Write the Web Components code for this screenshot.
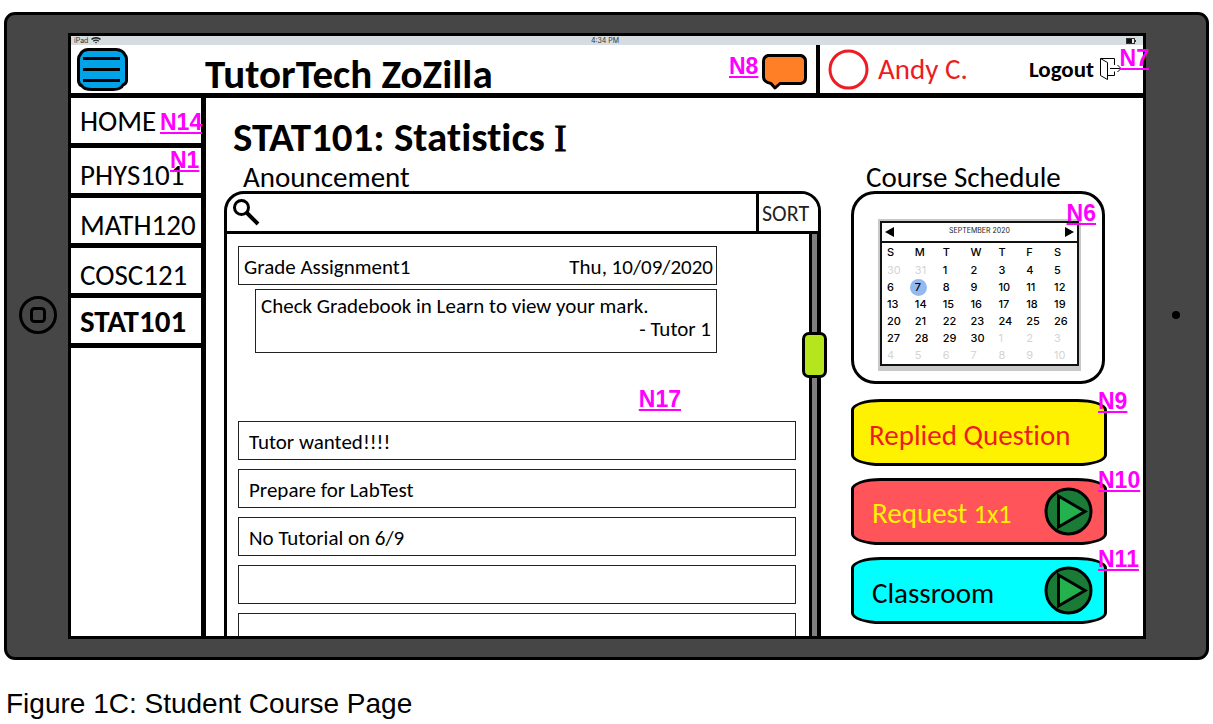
<!DOCTYPE html>
<html lang="en">
<head>
<meta charset="utf-8">
<title>Student Course Page</title>
<style>
  html, body { margin: 0; background: #fff; }
  body { font-family: Carlito, Calibri, Lato, sans-serif; font-variant-ligatures: none; color: #000; }
</style>
</head>
<body>
<course-figure>
  <tablet-frame>
    <status-bar></status-bar>
    <app-header user="Andy C.">TutorTech ZoZilla</app-header>
    <course-layout>
      <course-nav slot="nav">
        <nav-item raised note="N14" style="--note-x: 89px; --note-y: 12px">HOME</nav-item>
        <nav-item note="N1" style="--note-x: 99px; --note-y: 0px">PHYS101</nav-item>
        <nav-item>MATH120</nav-item>
        <nav-item>COSC121</nav-item>
        <nav-item raised current>STAT101</nav-item>
      </course-nav>
      <span slot="title">STAT101: Statistics</span>
      <announcement-board slot="board">
        <announcement-item open date="Thu, 10/09/2020" author="- Tutor 1" body="Check Gradebook in Learn to view your mark.">Grade Assignment1</announcement-item>
        <announcement-item>Tutor wanted!!!!</announcement-item>
        <announcement-item>Prepare for LabTest</announcement-item>
        <announcement-item>No Tutorial on 6/9</announcement-item>
        <announcement-item></announcement-item>
        <announcement-item></announcement-item>
      </announcement-board>
      <schedule-calendar slot="side"></schedule-calendar>
      <action-button slot="side" note="N9" style="--fill: #fff200; --ink: #ed1c24">Replied Question</action-button>
      <action-button slot="side" play note="N10" style="--fill: #ff555a; --ink: #fff200">Request <small>1x1</small></action-button>
      <action-button slot="side" play note="N11" style="--fill: #00ffff; --ink: #000">Classroom</action-button>
    </course-layout>
  </tablet-frame>
  <span slot="caption">Figure 1C: Student Course Page</span>
</course-figure>

<script>
function define(name, render) {
  customElements.define(name, class extends HTMLElement {
    connectedCallback() {
      if (this.shadowRoot) return;
      const t = document.createElement('template');
      t.innerHTML = '<style>*{box-sizing:border-box}button,input{font:inherit;color:inherit;margin:0}</style>' + render(this);
      this.attachShadow({ mode: 'open' }).append(t.content.cloneNode(true));
    }
  });
}

define('course-figure', () => `
<style>
  :host { display: block; }
  figure { margin: 0; display: flex; flex-direction: column; height: 100vh; min-height: 640px; padding: 12px 4px 0; }
  ::slotted(tablet-frame) { flex: 1; min-height: 0; }
  figcaption { font: 28px/32px "Liberation Sans", Arial, sans-serif; padding: 28px 2px 4px; }
</style>
<figure><slot></slot><figcaption><slot name="caption"></slot></figcaption></figure>`);

define('tablet-frame', () => `
<style>
  :host { display: grid; grid-template-columns: 61px minmax(0, 1fr) 60px; padding: 18px 0; background: #464646; border: 3px solid #000; border-radius: 11px; box-sizing: border-box; }
  .edge { display: flex; align-items: center; justify-content: center; }
  .screen { background: #fff; border: 3px solid #000; display: flex; flex-direction: column; min-height: 0; }
  ::slotted(course-layout) { flex: 1; min-height: 0; }
  .home, .camera { display: block; margin-top: -42px; }
</style>
<div class="edge"><svg class="home" width="40" height="40" viewBox="0 0 40 40" fill="none" stroke="#000" stroke-width="3"><circle cx="20" cy="20" r="17.5"/><rect x="13.500" y="13.500" width="13" height="13" rx="3"/></svg></div>
<div class="screen"><slot></slot></div>
<div class="edge"><svg class="camera" width="10" height="10"><circle cx="5" cy="5" r="4"/></svg></div>`);

define('status-bar', () => `
<style>
  :host { display: grid; grid-template-columns: 1fr auto 1fr; align-items: center; background: #d6dde0; color: #333; font: 7px/9px Inter, sans-serif; padding: 0 7px 0 3px; }
  .left { display: flex; gap: 3px; align-items: center; }
  .right { display: flex; justify-content: flex-end; }
  svg { display: block; }
</style>
<span class="left">iPad <svg width="10" height="7" viewBox="0 0 10 7" fill="none" stroke="#222" stroke-width="1.400"><path d="M.5 2.400Q5-1 9.500 2.400M2.300 4.200Q5 2 7.700 4.200"/><circle cx="5" cy="5.600" r=".8" fill="#222" stroke="none"/></svg></span>
<span>4:34 PM</span>
<span class="right"><svg width="10" height="6"><rect x=".5" y=".5" width="8" height="5" fill="#eee" stroke="#333"/><rect x="1" y="1" width="5" height="4" fill="#111"/><rect x="9" y="2" width="1" height="2" fill="#333"/></svg></span>`);

define('note-link', () => `
<style>
  :host { position: absolute; z-index: 5; display: block; }
  a { font: bold 23px/24px "Liberation Sans", Arial, sans-serif; color: #f0f; display: block; text-decoration: underline; text-decoration-thickness: 2px; text-underline-offset: 2px; }
</style>
<a href="#note"><slot></slot></a>`);

define('app-header', el => `
<style>
  :host { display: grid; grid-template-columns: minmax(0, 1fr) 327px; height: 53px; border-bottom: 5px solid #000; box-sizing: border-box; }
  .brand { display: flex; align-items: center; padding: 0 9px 0 6px; }
  .menu { border: 0; padding: 0; background: none; width: 51px; margin-right: 77px; }
  svg { display: block; }
  h1 { margin: 0; flex: 1; align-self: flex-end; font-size: 41px; line-height: 38px; font-weight: bold; white-space: nowrap; }
  .chat { position: relative; margin-top: 5px; }
  .chat button { border: 0; padding: 0; background: none; display: block; }
  .chat note-link { left: -33px; top: 0; }
  .user { position: relative; display: flex; align-items: center; border-left: 4px solid #000; padding: 0 20px 0 8px; }
  .name { color: #ed1c24; font-size: 29px; line-height: 32px; margin-left: 9px; flex: 1; }
  .logout { border: 0; padding: 0; background: none; font-size: 23px; line-height: 26px; font-weight: bold; display: flex; gap: 5px; align-items: center; }
  .user note-link { right: -6px; top: 1px; }
</style>
<div class="brand">
  <button class="menu" aria-label="Menu"><svg width="51" height="43" viewBox="0 0 51 43"><path d="M11 1.500H39Q46 2 48 7Q49.500 8 49.500 12V33Q49 36 46 37Q44 41.500 36 41.500H15Q7 41.500 5 38Q2 37 1.500 33V12Q1.500 8 3 7Q5 2 11 1.500Z" fill="#00a2e8" stroke="#000" stroke-width="3"/><path d="M6 10.500H43M6 21.500H43M6 32.500H43" stroke="#000" stroke-width="3"/></svg></button>
  <h1><slot></slot></h1>
  <div class="chat"><button aria-label="Messages"><svg width="45" height="36" viewBox="0 0 45 36"><path d="M6 1.500H39Q43.500 3 43.500 7V24Q43.500 28.500 39 29.500H18L13 34L9 29.500Q1.500 28 1.500 23V7Q1.500 3 6 1.500Z" fill="#ff7f27" stroke="#000" stroke-width="3" stroke-linejoin="round"/></svg></button><note-link>N8</note-link></div>
</div>
<div class="user">
  <svg width="41" height="41"><circle cx="20.500" cy="20.500" r="18.500" fill="none" stroke="#ed1c24" stroke-width="3"/></svg>
  <span class="name">${el.getAttribute('user')}</span>
  <button class="logout">Logout <svg width="24" height="24" viewBox="0 0 24 24" fill="none" stroke="#000"><path d="M1.500 1.500L8.500 5.500V22.500L1.500 18.500ZM1.500 1.500H15.500V8M15.500 14.500V18.500H8.500M11 11.500H22M18.500 8L22 11.500L18.500 15"/></svg></button>
  <note-link>N7</note-link>
</div>`);

define('course-layout', () => `
<style>
  :host { display: grid; grid-template-columns: 135px minmax(0, 1fr); }
  .side { border-right: 5px solid #000; }
  main { display: grid; grid-template-columns: minmax(0, 1fr) 254px; grid-template-rows: auto auto minmax(0, 1fr); column-gap: 30px; padding: 19px 38px 0 18px; min-height: 0; }
  h2 { grid-column: 1 / -1; margin: 0 0 4px; padding-left: 9px; font-size: 41px; line-height: 40px; }
  h2 i { font: 400 37px/40px "Liberation Serif", serif; -webkit-text-stroke: 1px #000; }
  h3 { margin: 0; font-size: 29px; line-height: 28px; font-weight: 400; padding-left: 19px; }
  h3 + h3 { padding-left: 15px; }
  .actions { display: flex; flex-direction: column; gap: 12px; }
</style>
<div class="side"><slot name="nav"></slot></div>
<main>
  <h2><slot name="title"></slot> <i>I</i></h2>
  <h3>Anouncement</h3><h3>Course Schedule</h3>
  <slot name="board"></slot>
  <div class="actions"><slot name="side"></slot></div>
</main>`);

define('course-nav', () => `
<style>:host { display: block; } nav { display: flex; flex-direction: column; }</style>
<nav><slot></slot></nav>`);

define('nav-item', el => `
<style>
  :host { display: block; position: relative; height: 50px; border-bottom: 5px solid #000; box-sizing: border-box; }
  a { display: flex; align-items: center; height: 100%; padding: 9px 0 0 9px; color: #000; text-decoration: none; font-size: 29px; white-space: nowrap; }
  :host([raised]) a { padding-top: 1px; }
  :host([current]) a { font-weight: bold; font-size: 31px; }
  note-link { left: var(--note-x); top: var(--note-y); }
</style>
<a href="#course"><slot></slot></a>${el.hasAttribute('note') ? `<note-link>${el.getAttribute('note')}</note-link>` : ''}`);

define('announcement-board', () => `
<style>
  :host { display: grid; grid-template-rows: 43px minmax(0, 1fr); min-height: 0; min-width: 0; }
  .search { display: flex; border: 3px solid #000; border-radius: 20px 20px 0 0; overflow: hidden; }
  .search svg { flex: none; margin: 3px 0 0 4px; }
  input { flex: 1; min-width: 0; border: 0; outline: 0; background: none; font-size: 21px; padding: 0 6px; }
  .search button { width: 62px; border: 0; border-left: 3px solid #000; background: #fff; padding: 2px 6px 0 3px; text-align: left; font-size: 22px; color: #222; }
  .body { position: relative; display: grid; grid-template-columns: minmax(0, 1fr) 12px; min-height: 0; }
  .list { border-left: 3px solid #000; padding: 12px 13px 0 11px; display: flex; flex-direction: column; gap: 9px; overflow: hidden; min-height: 0; }
  .track { position: relative; background: #7f7f7f; border: solid #000; border-width: 0 4px 0 3px; }
  .thumb { position: absolute; left: -10px; top: 98px; width: 25px; height: 46px; border: 3px solid #000; border-radius: 7px; background: #b5e61d; }
  .body > note-link { right: 140px; top: 153px; }
</style>
<div class="search">
  <svg width="30" height="30" viewBox="0 0 30 30" fill="none" stroke="#000" stroke-width="3"><circle cx="10.500" cy="10.500" r="7"/><path d="M15.500 15.500L27 27" stroke-width="4"/></svg>
  <input type="text" aria-label="Search announcements"><button>SORT</button>
</div>
<div class="body">
  <div class="list"><slot></slot></div>
  <div class="track"><div class="thumb"></div></div>
  <note-link>N17</note-link>
</div>`);

define('announcement-item', el => el.hasAttribute('open') ? `
<style>
  :host { display: block; flex: none; height: 166px; font-size: 21px; line-height: 23px; padding-right: 79px; box-sizing: border-box; }
  .head { display: flex; justify-content: space-between; align-items: center; height: 39px; border: 1px solid #222; padding: 3px 3px 0 5px; }
  .reply { margin: 4px 0 0 17px; height: 64px; border: 1px solid #222; padding: 5px; }
  p { margin: 0; white-space: nowrap; }
  .author { text-align: right; }
</style>
<div class="head"><span><slot></slot></span><time>${el.getAttribute('date')}</time></div>
<div class="reply"><p>${el.getAttribute('body')}</p><p class="author">${el.getAttribute('author')}</p></div>` : `
<style>
  :host { display: flex; flex: none; align-items: center; height: 39px; border: 1px solid #222; padding: 3px 10px 0; font-size: 21px; line-height: 23px; box-sizing: border-box; }
</style><slot></slot>`);

define('schedule-calendar', () => {
  const days = [30, 31, ...Array.from({ length: 30 }, (_, i) => i + 1), ...Array.from({ length: 10 }, (_, i) => i + 1)];
  let rows = '';
  for (let r = 0; r < 6; r++) {
    rows += '<tr>' + days.slice(r * 7, r * 7 + 7).map((d, c) => {
      const i = r * 7 + c;
      const cls = i < 2 || i > 31 ? 'out' : i === 8 ? 'today' : '';
      return `<td class="${cls}"><span>${d}</span></td>`;
    }).join('') + '</tr>';
  }
  return `
<style>
  :host { display: block; position: relative; border: 3px solid #000; border-radius: 24px; padding: 25px 21px 10px 24px; height: 193px; margin-bottom: 3px; box-sizing: border-box; font-family: Inter, sans-serif; }
  .shade { background: #c8c8c8; padding: 2px 2px 5px; }
  .cal { background: #fff; border: 2px solid #111; }
  .bar { display: flex; justify-content: space-between; align-items: center; height: 20px; border-bottom: 2px solid #111; padding: 0 3px; font-size: 7px; line-height: 9px; color: #222; }
  .bar span { padding-bottom: 3px; }
  .bar button { border: 0; padding: 0; background: none; }
  svg { display: block; }
  table { width: 100%; border-collapse: collapse; table-layout: fixed; font-size: 11px; line-height: 17px; }
  th, td { padding: 0 0 0 5px; text-align: left; font-weight: 500; }
  th { height: 19px; }
  .out { color: #d4d4d4; font-weight: 400; }
  .today span { display: block; width: 17px; height: 17px; padding-left: 5px; margin-left: -5px; background: #93b9ee; border-radius: 50%; }
  note-link { right: 6px; top: 7px; }
</style>
<div class="shade"><div class="cal">
  <div class="bar"><button aria-label="Previous month"><svg width="9" height="10"><path d="M9 0V10L0 5Z"/></svg></button><span>SEPTEMBER 2020</span><button aria-label="Next month"><svg width="9" height="10"><path d="M0 0V10L9 5Z"/></svg></button></div>
  <table><thead><tr>${'SMTWTFS'.split('').map(d => `<th scope="col">${d}</th>`).join('')}</tr></thead><tbody>${rows}</tbody></table>
</div></div><note-link>N6</note-link>`;
});

define('action-button', el => `
<style>
  :host { display: block; position: relative; margin-right: -2px; }
  button { display: flex; justify-content: space-between; align-items: center; width: 100%; height: 67px; border: 3px solid #000; border-radius: 30px / 11px; background: var(--fill); color: var(--ink); font-size: 29px; line-height: 32px; padding: 4px 11px 0 15px; text-align: left; }
  :host([play]) button { padding-left: 18px; }
  svg { display: block; margin-top: -4px; }
  ::slotted(small) { font-size: 26px; }
  note-link { left: 247px; top: -10px; }
</style>
<button><span><slot></slot></span>${el.hasAttribute('play') ? '<svg width="49" height="49" viewBox="0 0 49 49" stroke="#000" stroke-width="3"><circle cx="24.500" cy="24.500" r="22.500" fill="#1a7b36"/><path d="M14.500 9V40L41 24.500Z" fill="#22b14c"/></svg>' : ''}</button><note-link>${el.getAttribute('note')}</note-link>`);
</script>
</body>
</html>
